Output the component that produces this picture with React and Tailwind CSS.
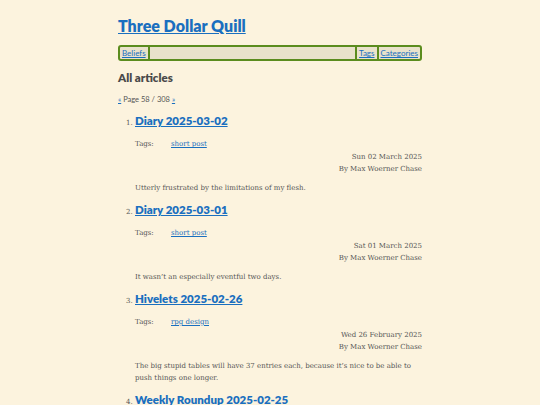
const articles = [
    { title: 'Diary 2025-03-02', tag: 'short post', date: 'Sun 02 March 2025', summary: 'Utterly frustrated by the limitations of my flesh.' },
    { title: 'Diary 2025-03-01', tag: 'short post', date: 'Sat 01 March 2025', summary: 'It wasn\u2019t an especially eventful two days.' },
    { title: 'Hivelets 2025-02-26', tag: 'rpg design', date: 'Wed 26 February 2025', summary: 'The big stupid tables will have 37 entries each, because it\u2019s nice to be able to push things one longer.' },
    { title: 'Weekly Roundup 2025-02-25', tag: 'short post', date: 'Tue 25 February 2025', summary: 'A week of things.' },
];

const sans = { fontFamily: 'Lato, "Noto Sans", sans-serif' };
const serif = { fontFamily: '"DejaVu Serif", serif' };

export default function App() {
    return (
        <div className="min-h-[405px] bg-[#fcf3de] text-[#444]" style={serif}>
            <div className="mx-auto w-[304px] pt-[14px]">
                {/* Header */}
                <h1 className="text-[16px] leading-[24px] font-extrabold" style={sans}>
                    <a href="#" className="text-[#1a6fbf] underline">Three Dollar Quill</a>
                </h1>

                {/* Nav */}
                <nav className="mt-[7px] flex h-[16px] items-stretch rounded-[3px] border-2 border-[#5b8c1e] bg-[#e9e2cb] text-[8px] leading-[12px]" style={sans}>
                    <a href="#" className="border-r-2 border-[#5b8c1e] px-[2px] text-[#1a6fbf] underline">Beliefs</a>
                    <div className="flex-1" />
                    <a href="#" className="border-l-2 border-r-2 border-[#5b8c1e] px-[2px] text-[#1a6fbf] underline">Tags</a>
                    <a href="#" className="px-[2px] text-[#1a6fbf] underline">Categories</a>
                </nav>

                <h2 className="mt-[8px] text-[11.5px] leading-[18px] font-extrabold text-[#4a4a4a]" style={sans}>All articles</h2>

                <p className="mt-[8px] text-[7.5px] leading-[10px] text-[#555]" style={sans}>
                    <a href="#" className="text-[#1a6fbf] underline">«</a> Page 58 / 308 <a href="#" className="text-[#1a6fbf] underline">»</a>
                </p>

                {/* Articles */}
                <ol className="mt-[7px] list-decimal pl-[17px] marker:text-[7px] marker:text-[#555]">
                    {articles.map((a, i) => (
                        <li key={i} className="mb-[7px]">
                            <h3 className="text-[11.5px] leading-[18px] font-extrabold" style={sans}>
                                <a href="#" className="text-[#1a6fbf] underline">{a.title}</a>
                            </h3>
                            <div className="mt-[8px] flex text-[7px] leading-[12px] text-[#555]">
                                <span className="w-[36px]">Tags:</span>
                                <a href="#" className="text-[#1a6fbf] underline">{a.tag}</a>
                            </div>
                            <div className="mt-[1px] text-right text-[7px] leading-[12px] text-[#555]">
                                <div>{a.date}</div>
                                <div>By Max Woerner Chase</div>
                            </div>
                            <p className="mt-[7px] text-[7px] leading-[12px] text-[#555]">{a.summary}</p>
                        </li>
                    ))}
                </ol>
            </div>
        </div>
    );
}
